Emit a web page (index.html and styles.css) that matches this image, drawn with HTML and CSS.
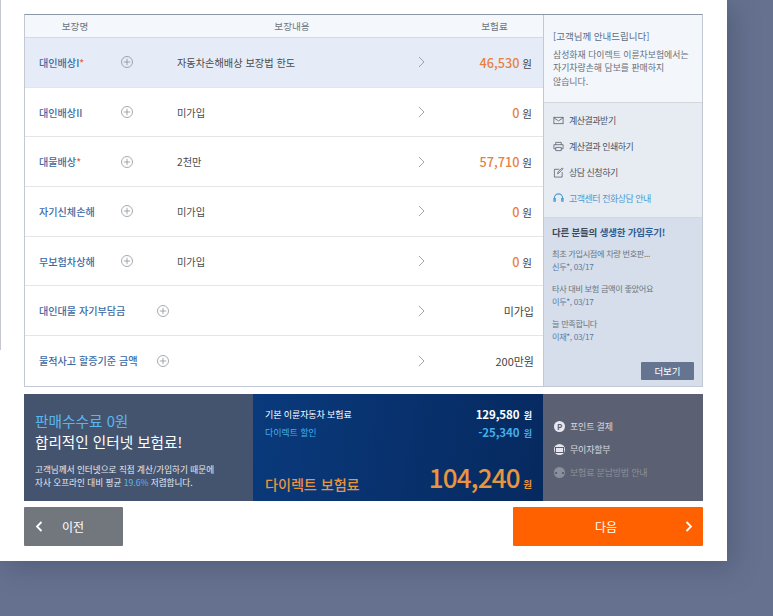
FILE: index.html
```html
<!DOCTYPE html>
<html lang="ko">
<head>
    <meta charset="UTF-8">
    <meta name="viewport" content="width=device-width, initial-scale=1.0">
    <title>보험료 계산결과</title>
    <link rel="stylesheet" href="styles.css">
</head>
<body>

<div class="card">
    <div class="panel">
        <div class="coverage">
            <div class="coverage-head">
                <span class="head-name">보장명</span>
                <span class="head-content">보장내용</span>
                <span class="head-price">보험료</span>
            </div>

            <div class="row active">
                <div class="name"><span class="label">대인배상I<em>*</em></span><svg class="plus" viewBox="0 0 12 12"><circle cx="6" cy="6" r="5.5"/><path d="M2.8 6h6.4M6 2.8v6.4"/></svg></div>
                <div class="content">자동차손해배상 보장법 한도</div>
                <svg class="chev" viewBox="0 0 7 12"><path d="M1 1l5 5-5 5"/></svg>
                <div class="price"><b>46,530</b> 원</div>
            </div>
            <div class="row">
                <div class="name"><span class="label">대인배상II</span><svg class="plus" viewBox="0 0 12 12"><circle cx="6" cy="6" r="5.5"/><path d="M2.8 6h6.4M6 2.8v6.4"/></svg></div>
                <div class="content">미가입</div>
                <svg class="chev" viewBox="0 0 7 12"><path d="M1 1l5 5-5 5"/></svg>
                <div class="price"><b>0</b> 원</div>
            </div>
            <div class="row">
                <div class="name"><span class="label">대물배상<em>*</em></span><svg class="plus" viewBox="0 0 12 12"><circle cx="6" cy="6" r="5.5"/><path d="M2.8 6h6.4M6 2.8v6.4"/></svg></div>
                <div class="content">2천만</div>
                <svg class="chev" viewBox="0 0 7 12"><path d="M1 1l5 5-5 5"/></svg>
                <div class="price"><b>57,710</b> 원</div>
            </div>
            <div class="row">
                <div class="name"><span class="label">자기신체손해</span><svg class="plus" viewBox="0 0 12 12"><circle cx="6" cy="6" r="5.5"/><path d="M2.8 6h6.4M6 2.8v6.4"/></svg></div>
                <div class="content">미가입</div>
                <svg class="chev" viewBox="0 0 7 12"><path d="M1 1l5 5-5 5"/></svg>
                <div class="price"><b>0</b> 원</div>
            </div>
            <div class="row">
                <div class="name"><span class="label">무보험차상해</span><svg class="plus" viewBox="0 0 12 12"><circle cx="6" cy="6" r="5.5"/><path d="M2.8 6h6.4M6 2.8v6.4"/></svg></div>
                <div class="content">미가입</div>
                <svg class="chev" viewBox="0 0 7 12"><path d="M1 1l5 5-5 5"/></svg>
                <div class="price"><b>0</b> 원</div>
            </div>
            <div class="row">
                <div class="name"><span class="label wide">대인대물 자기부담금</span><svg class="plus" viewBox="0 0 12 12"><circle cx="6" cy="6" r="5.5"/><path d="M2.8 6h6.4M6 2.8v6.4"/></svg></div>
                <div class="content"></div>
                <svg class="chev" viewBox="0 0 7 12"><path d="M1 1l5 5-5 5"/></svg>
                <div class="price plain">미가입</div>
            </div>
            <div class="row">
                <div class="name"><span class="label wide">물적사고 할증기준 금액</span><svg class="plus" viewBox="0 0 12 12"><circle cx="6" cy="6" r="5.5"/><path d="M2.8 6h6.4M6 2.8v6.4"/></svg></div>
                <div class="content"></div>
                <svg class="chev" viewBox="0 0 7 12"><path d="M1 1l5 5-5 5"/></svg>
                <div class="price plain">200만원</div>
            </div>
        </div>

        <div class="side">
            <div class="notice">
                <p class="notice-title">[고객님께 안내드립니다]</p>
                <p>삼성화재 다이렉트 이륜차보험에서는<br>자기차량손해 담보를 판매하지<br>않습니다.</p>
            </div>
            <ul class="menu">
                <li><svg viewBox="0 0 12 12"><rect x="1" y="2.5" width="10" height="7"/><path d="M1 3l5 3.5L11 3"/></svg>계산결과받기</li>
                <li><svg viewBox="0 0 12 12"><path d="M3 4V1.500h6V4M3 8.500H1V4h10v4.500H9M3 7h6v3.500H3z"/></svg>계산결과 인쇄하기</li>
                <li><svg viewBox="0 0 12 12"><path d="M7 2.500H1.500v8.500h8.500V5.500M5 7.500l.5-2L10 1l1 1-4.500 4.500z"/></svg>상담 신청하기</li>
                <li class="call"><svg viewBox="0 0 12 12"><path d="M1.500 7V5.500a4.500 4.500 0 0 1 9 0V7M1 6h1.500v3H1zM9.500 6H11v3H9.500z"/></svg>고객센터 전화상담 안내</li>
            </ul>
            <div class="reviews">
                <h3>다른 분들의 <span>생생한 가입후기!</span></h3>
                <p>최초 가입시점에 차량 번호판...<br><small>신두*, 03/17</small></p>
                <p>타사 대비 보험 금액이 좋았어요<br><small>이두*, 03/17</small></p>
                <p>늘 만족합니다<br><small>이재*, 03/17</small></p>
                <a class="more">더보기</a>
            </div>
        </div>
    </div>

    <div class="band">
        <div class="promo">
            <div class="promo-blue">판매수수료 0원</div>
            <div class="promo-title">합리적인 인터넷 보험료!</div>
            <p>고객님께서 인터넷으로 직접 계산/가입하기 때문에<br>자사 오프라인 대비 평균 <span>19.6%</span> 저렴합니다.</p>
        </div>
        <div class="total">
            <div class="total-line"><span>기본 이륜자동차 보험료</span><span class="amount"><b>129,580</b> 원</span></div>
            <div class="total-line discount"><span>다이렉트 할인</span><span class="amount"><b>-25,340</b> 원</span></div>
            <div class="total-final"><span class="final-label">다이렉트 보험료</span><span class="final-amount"><b>104,240</b> 원</span></div>
        </div>
        <ul class="pay">
            <li><i>P</i>포인트 결제</li>
            <li><i class="bar"></i>무이자할부</li>
            <li class="dim"><i class="dots"></i>보험료 분납방법 안내</li>
        </ul>
    </div>

    <div class="nav">
        <a class="btn prev"><svg viewBox="0 0 8 12"><path d="M6.500 1.500L2 6l4.500 4.500"/></svg>이전</a>
        <a class="btn next">다음<svg viewBox="0 0 8 12"><path d="M1.500 1.500L6 6l-4.500 4.500"/></svg></a>
    </div>
</div>

</body>
</html>
```

FILE: styles.css
```css
* {
    box-sizing: border-box;
}
html, body {
    margin: 0;
    height: 100%;
    overflow: hidden;
}
body {
    background-color: #65718f;
    font-family: "Noto Sans CJK KR", "Noto Sans", sans-serif;
    font-size: 10px;
    color: #444;
}
p, ul, h3 {
    margin: 0;
    padding: 0;
}
ul {
    list-style: none;
}
.card {
    width: 727px;
    height: 561px;
    padding: 14px 24px 0;
    background: linear-gradient(#c6c9d1, #c6c9d1) 0 0 / 1px 350px no-repeat, #fff;
    box-shadow: 6px 6px 24px rgba(60, 70, 95, 0.45);
}

/* table + side column */
.panel {
    display: flex;
    height: 373px;
    border: 1px solid #c3c9d2;
    border-top: 1px solid #8e97a5;
}
.coverage {
    width: 519px;
    border-right: 1px solid #c3c9d2;
}
.coverage-head {
    display: grid;
    grid-template-columns: 100px 334px 84px;
    align-items: center;
    height: 23px;
    background-color: #f4f7fb;
    border-bottom: 1px solid #d3dae6;
    color: #6c7480;
    font-size: 9.6px;
    text-align: center;
}
.head-price {
    padding-right: 13px;
}
.row {
    display: flex;
    align-items: center;
    height: 49.7px;
    border-bottom: 1px solid #e3e5e9;
    padding-left: 14px;
}
.row:last-child {
    border-bottom: 0;
}
.row.active {
    background-color: #e6ecf7;
}
.name {
    display: flex;
    align-items: center;
    width: 138px;
}
.label {
    width: 82px;
    color: #3d6aa5;
    font-size: 10.1px;
    font-weight: 500;
}
.label.wide {
    width: 118px;
}
.label em {
    color: #e8663a;
    font-style: normal;
}
.plus {
    width: 12px;
    height: 12px;
    fill: none;
    stroke: #808791;
    stroke-width: 0.7;
}
.content {
    width: 241px;
    color: #4b4b4b;
    font-size: 10.2px;
}
.chev {
    width: 7px;
    height: 12px;
    fill: none;
    stroke: #8a8f97;
    stroke-width: 0.8;
}
.price {
    margin-left: auto;
    padding-right: 11px;
    color: #444;
    font-size: 10.5px;
}
.price b {
    color: #e8803f;
    font-size: 12.7px;
    font-weight: 500;
}
.price.plain {
    padding-right: 9px;
    font-size: 11px;
}

/* side column */
.side {
    display: flex;
    flex-direction: column;
    width: 158px;
}
.notice {
    height: 88px;
    padding: 15px 9px 0;
    background-color: #f3f6fb;
    border-bottom: 1px solid #d3d8e0;
    color: #66707c;
    font-size: 8.9px;
    line-height: 13.500px;
    white-space: nowrap;
}
.notice-title {
    margin-bottom: 4px;
    color: #5b6d85;
    font-size: 9.500px;
}
.menu {
    height: 115px;
    padding-top: 4px;
    background-color: #e7ecf2;
    border-bottom: 1px solid #d3d8e0;
}
.menu li {
    display: flex;
    align-items: center;
    height: 26px;
    padding-left: 9px;
    color: #4a5566;
    font-size: 9px;
    letter-spacing: -0.5px;
}
.menu svg {
    width: 11px;
    height: 11px;
    margin-right: 5px;
    fill: none;
    stroke: #4d5564;
    stroke-width: 0.8;
}
.menu .call {
    color: #4a9bd4;
}
.menu .call svg {
    stroke: #4a9bd4;
    stroke-width: 1.2;
}
.reviews {
    position: relative;
    flex: 1;
    padding: 7px 8px 0;
    background-color: #d5deea;
    color: #6a7482;
    font-size: 8.200px;
    letter-spacing: -0.35px;
    line-height: 13px;
}
.reviews h3 {
    margin-bottom: 7.500px;
    color: #3d4a5c;
    font-size: 9.500px;
    font-weight: 700;
    letter-spacing: -0.2px;
    line-height: 14px;
}
.reviews h3 span {
    color: #2f5d96;
}
.reviews p {
    margin-bottom: 9px;
}
.reviews small {
    color: #5d7aa3;
    font-size: 8.200px;
}
.more {
    position: absolute;
    right: 8px;
    bottom: 6px;
    width: 53px;
    height: 18px;
    background-color: #66758f;
    border-radius: 1px;
    color: #fff;
    font-size: 9.500px;
    letter-spacing: 0;
    line-height: 18px;
    text-align: center;
}

/* bottom band */
.band {
    display: flex;
    height: 107px;
    margin-top: 7px;
}
.promo {
    width: 229px;
    padding: 17px 0 0 11px;
    background-color: #44546f;
    color: #e6e9ef;
}
.promo-blue {
    color: #5ab6ee;
    font-size: 14.700px;
    line-height: 20px;
}
.promo-title {
    color: #fff;
    font-size: 14.600px;
    line-height: 22px;
}
.promo p {
    margin-top: 10px;
    font-size: 8.600px;
    line-height: 13px;
}
.promo p span {
    color: #5cb4ea;
}
.total {
    display: flex;
    flex-direction: column;
    width: 290px;
    padding: 11px 11px 0 12px;
    background: linear-gradient(100deg, #0a3a7c, #06295f);
    color: #fff;
    font-size: 9px;
    letter-spacing: -0.1px;
}
.total-line {
    display: flex;
    justify-content: space-between;
    align-items: center;
    height: 18px;
}
.amount {
    font-weight: 700;
}
.amount b {
    font-size: 11.500px;
    font-weight: 700;
    margin-right: 2px;
}
.total-line.discount {
    color: #45aee6;
}
.total-final {
    display: flex;
    justify-content: space-between;
    align-items: flex-end;
    margin-top: auto;
    padding-bottom: 8px;
    color: #e89540;
    font-weight: 500;
}
.final-label {
    margin-bottom: -1px;
    font-size: 14.200px;
}
.final-amount {
    font-size: 9.500px;
    font-weight: 700;
}
.final-amount b {
    font-size: 26px;
    font-weight: 500;
    letter-spacing: -0.8px;
    line-height: 32px;
    margin-right: 1px;
}
.pay {
    flex: 1;
    padding: 21px 0 0 11px;
    background-color: #5b6172;
    color: #d6d9e0;
    font-size: 9px;
    letter-spacing: -0.2px;
}
.pay li {
    display: flex;
    align-items: center;
    height: 23px;
}
.pay i {
    display: flex;
    justify-content: center;
    align-items: center;
    width: 11px;
    height: 11px;
    margin-right: 5px;
    border-radius: 50%;
    background-color: #e6e8ee;
    color: #5b6172;
    font-size: 8px;
    font-style: normal;
    font-weight: 700;
}
.pay i.bar::before {
    content: "";
    width: 7px;
    height: 4px;
    border: 1px solid #5b6172;
}
.pay i.dots::before {
    content: "";
    width: 5px;
    height: 2px;
    border-left: 2px solid #5b6172;
    border-right: 2px solid #5b6172;
}
.pay .dim {
    color: #8a8f9c;
}
.pay .dim i {
    background-color: #8a8f9c;
}

/* prev / next */
.nav {
    display: flex;
    justify-content: space-between;
    margin-top: 6px;
}
.btn {
    position: relative;
    display: flex;
    align-items: center;
    height: 39px;
    border-radius: 1px;
    color: #fff;
    font-size: 12px;
}
.btn svg {
    width: 8px;
    height: 13px;
    fill: none;
    stroke: #fff;
    stroke-width: 1.8;
}
.prev {
    width: 99px;
    padding-left: 11px;
    background-color: #72777e;
}
.prev svg {
    margin-right: 19px;
}
.next {
    justify-content: center;
    width: 190px;
    padding-right: 4px;
    background-color: #ff6000;
}
.next svg {
    position: absolute;
    right: 10px;
}
```
